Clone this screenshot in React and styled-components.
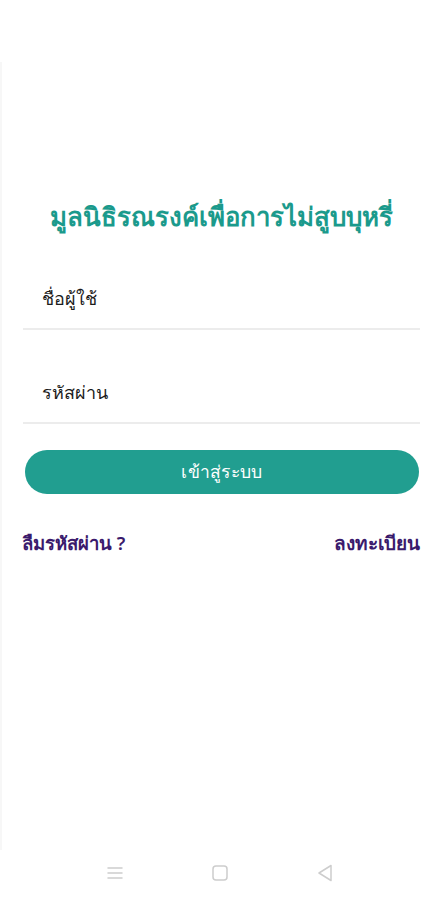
import React from 'react';
import styled, { createGlobalStyle } from 'styled-components';

const GlobalStyle = createGlobalStyle`
  html, body {
    margin: 0;
    padding: 0;
    background: #ffffff;
  }
  body {
    font-family: "Noto Sans", "Liberation Sans", sans-serif;
  }
`;

const Screen = styled.div`
  width: 439px;
  height: 900px;
  display: flex;
  flex-direction: column;
  background: #fff;
  overflow: hidden;
`;

const Body = styled.div`
  flex: 1;
  display: flex;
  flex-direction: column;
  padding: 62px 0 0;
`;

const Content = styled.div`
  flex: 1;
  border-left: 2px solid #f7f7f7;
  display: flex;
  flex-direction: column;
  padding: 136px 19px 0 21px;
`;

const Title = styled.h1`
  margin: 0;
  text-align: center;
  color: #1b9a8c;
  font-size: 25.8px;
  font-weight: 700;
  line-height: 36px;
`;

const Field = styled.label`
  display: flex;
  align-items: flex-end;
  height: ${p => p.$h}px;
  padding: 0 0 18px 19px;
  box-sizing: border-box;
  border-bottom: 2px solid #ececec;
  font-size: 18px;
  line-height: 24px;
  color: #1c1c1c;
`;

const LoginButton = styled.button`
  margin: 26px 1px 0 2px;
  height: 44px;
  border: none;
  border-radius: 22px;
  background: #219e90;
  color: #fff;
  font-family: inherit;
  font-size: 17.5px;
  font-weight: 500;
  letter-spacing: 0.3px;
`;

const Links = styled.div`
  display: flex;
  justify-content: space-between;
  align-items: center;
  margin: 36px 0 0 -1px;
`;

const LinkText = styled.a`
  color: #3a1a6c;
  font-size: ${p => p.$size}px;
  font-weight: 600;
  line-height: 26px;
  text-decoration: none;
`;

const NavBar = styled.div`
  height: 50px;
  display: flex;
  justify-content: center;
  align-items: center;
  gap: 85px;
  padding-bottom: 4px;
  box-sizing: border-box;
`;

const NavIcon = styled.svg`
  width: 20px;
  height: 20px;
  fill: none;
  stroke: #cdcdcd;
  stroke-width: 1.5;
  stroke-linecap: round;
  stroke-linejoin: round;
`;

export default function App() {
  return (
    <>
      <GlobalStyle />
      <Screen>
        <Body>
          <Content>
            <Title>มูลนิธิรณรงค์เพื่อการไม่สูบบุหรี่</Title>
            <Field $h={96}>ชื่อผู้ใช้</Field>
            <Field $h={94}>รหัสผ่าน</Field>
            <LoginButton>เข้าสู่ระบบ</LoginButton>
            <Links>
              <LinkText $size={18.5}>ลืมรหัสผ่าน ?</LinkText>
              <LinkText $size={19}>ลงทะเบียน</LinkText>
            </Links>
          </Content>
        </Body>
        <NavBar>
          <NavIcon viewBox="0 0 20 20">
            <path d="M3 5h14M3 10h14M3 15h14" />
          </NavIcon>
          <NavIcon viewBox="0 0 20 20">
            <rect x="3" y="3" width="14" height="14" rx="3" />
          </NavIcon>
          <NavIcon viewBox="0 0 20 20">
            <path d="M16 2.5L4 10l12 7.5z" />
          </NavIcon>
        </NavBar>
      </Screen>
    </>
  );
}
